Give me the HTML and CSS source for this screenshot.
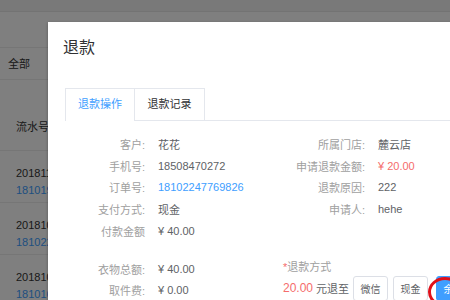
FILE: index.html
```html
<!DOCTYPE html>
<html lang="zh-CN">
<head>
    <meta charset="UTF-8">
    <meta name="viewport" content="width=device-width, initial-scale=1.0">
    <title>退款</title>
    <link rel="stylesheet" href="styles.css">
</head>
<body>
    <div class="page">
        <div class="topbar"></div>
        <div class="filter"></div>
        <div class="tabs-bg">全部</div>
        <div class="table">
            <div class="th">流水号/</div>
            <div class="tr"><span>201811</span><span class="link">181019</span></div>
            <div class="tr"><span>201810</span><span class="link">181022</span></div>
            <div class="tr"><span>201810</span><span class="link">181016</span></div>
        </div>
    </div>

    <div class="mask"></div>

    <div class="modal">
        <h2 class="title">退款</h2>
        <div class="tabs">
            <div class="tab active">退款操作</div>
            <div class="tab">退款记录</div>
        </div>

        <div class="info">
            <div class="col left">
                <span class="lbl">客户:</span><span class="val">花花</span>
                <span class="lbl">手机号:</span><span class="val">18508470272</span>
                <span class="lbl">订单号:</span><span class="val link">18102247769826</span>
                <span class="lbl">支付方式:</span><span class="val">现金</span>
                <span class="lbl">付款金额</span><span class="val">¥ 40.00</span>
            </div>
            <div class="col right">
                <span class="lbl">所属门店:</span><span class="val">麓云店</span>
                <span class="lbl">申请退款金额:</span><span class="val red">¥ 20.00</span>
                <span class="lbl">退款原因:</span><span class="val">222</span>
                <span class="lbl">申请人:</span><span class="val">hehe</span>
            </div>
        </div>

        <div class="info second">
            <div class="col left">
                <span class="lbl">衣物总额:</span><span class="val">¥ 40.00</span>
                <span class="lbl">取件费:</span><span class="val">¥ 0.00</span>
            </div>
            <div class="refund">
                <div class="refund-title"><span class="red">*</span>退款方式</div>
                <div class="refund-row">
                    <span class="red amount">20.00</span>
                    <span class="to">元退至</span>
                    <button class="btn">微信</button>
                    <button class="btn">现金</button>
                    <button class="btn primary">余额</button>
                </div>
            </div>
        </div>
    </div>

    <div class="circle"></div>
</body>
</html>
```

FILE: styles.css
```css
* {
    box-sizing: border-box;
}
body {
    margin: 0;
    width: 450px;
    height: 300px;
    overflow: hidden;
    position: relative;
    font-family: "Liberation Sans", "Noto Sans CJK SC", sans-serif;
    font-size: 11px;
    color: #333;
    background: #fff;
}
.page {
    width: 450px;
}
.topbar {
    height: 12px;
    background: #f2f2f2;
    border-bottom: 1px solid #e6e6e6;
}
.filter {
    height: 36px;
    border-bottom: 1px solid #ececec;
}
.tabs-bg {
    height: 32px;
    line-height: 32px;
    padding-left: 8px;
    border-bottom: 1px solid #ececec;
}
.table {
    padding-top: 38px;
}
.th {
    height: 33px;
    padding-left: 16px;
    border-bottom: 1px solid #ececec;
}
.tr {
    display: flex;
    flex-direction: column;
    gap: 5px;
    height: 52px;
    padding: 16px 0 0 16px;
    border-bottom: 1px solid #ececec;
}
.tr .link {
    color: #409eff;
}
.mask {
    position: absolute;
    inset: 0;
    background: rgba(0, 0, 0, 0.5);
}
.modal {
    position: absolute;
    left: 48px;
    top: 22px;
    width: 460px;
    height: 300px;
    background: #fff;
    box-shadow: 0 1px 3px rgba(0, 0, 0, 0.3);
}
.title {
    margin: 0;
    padding: 15px 15px 0;
    font-size: 16px;
    line-height: 22px;
    font-weight: normal;
    color: #303133;
}
.tabs {
    display: flex;
    margin: 29px 0 0 17px;
    border-bottom: 1px solid #e4e7ed;
}
.tab {
    width: 70px;
    height: 32px;
    line-height: 31px;
    text-align: center;
    border: 1px solid #e4e7ed;
    border-bottom: none;
    margin-bottom: -1px;
    color: #303133;
    background: #fff;
}
.tab + .tab {
    border-left: none;
}
.tab.active {
    color: #409eff;
    height: 33px;
}
.info {
    display: flex;
    margin: 12px 0 0 17px;
}
.info.second {
    margin-top: 16px;
}
.col {
    display: grid;
    grid-auto-rows: 21.75px;
    column-gap: 13px;
    align-items: center;
}
.col.left {
    grid-template-columns: 80px 1fr;
    width: 200px;
}
.col.right {
    grid-template-columns: 100px 1fr;
}
.lbl {
    text-align: right;
    color: #a0a0a0;
}
.val {
    color: #606266;
    white-space: nowrap;
}
.link {
    color: #409eff;
}
.red {
    color: #f56c6c;
}
.refund {
    padding-left: 18px;
    padding-top: 1px;
}
.refund-title {
    color: #a0a0a0;
    line-height: 16px;
}
.refund-row {
    display: flex;
    align-items: center;
    gap: 5px;
    margin-top: 1px;
    white-space: nowrap;
}
.refund-row .amount {
    font-size: 12px;
    margin-right: -2px;
}
.refund-row .to {
    color: #606266;
    font-size: 11px;
    margin-right: -1px;
}
.btn {
    width: 35px;
    height: 25px;
    padding: 0;
    border: 1px solid #dcdfe6;
    border-radius: 3px;
    background: #fff;
    color: #606266;
    font-family: inherit;
    font-size: 10px;
}
.btn.primary {
    margin-left: 3px;
    background: #409eff;
    border-color: #409eff;
    color: #fff;
}
.circle {
    position: absolute;
    left: 428px;
    top: 277px;
    width: 34px;
    height: 30px;
    border: 3px solid #e0101a;
    border-radius: 50%;
}
```
